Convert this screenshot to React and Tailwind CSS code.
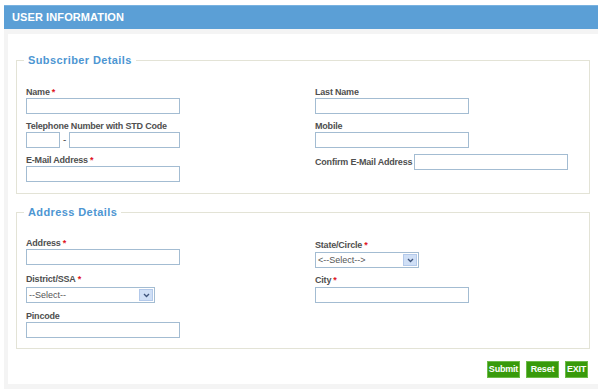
import React from 'react';

const font = { fontFamily: '"Liberation Sans", Arial, sans-serif' };

const Label = ({ children, required, className = '' }) => (
  <div className={`h-[12px] leading-[12px] text-[9px] font-bold tracking-[-0.2px] text-[#4f4f4f] whitespace-nowrap ${className}`}>
    {children}
    {required && <span className="text-[#e0141e] ml-[2px]">*</span>}
  </div>
);

const Input = ({ w = 'w-[154px]', className = '' }) => (
  <input
    type="text"
    className={`${w} h-[16px] border border-[#a3bcd2] bg-white outline-none ${className}`}
  />
);

const Select = ({ w, text, className = '' }) => (
  <div className={`${w} h-[16px] border border-[#a3bcd2] bg-white flex items-center justify-between ${className}`}>
    <span className="pl-[2px] text-[9px] leading-[12px] text-[#555]">{text}</span>
    <span className="w-[14px] h-[12px] mr-[1px] bg-[#cfdff6] border border-[#b3c9ea] grid place-items-center">
      <svg viewBox="0 0 8 6" className="w-[7px] h-[5px]">
        <path d="M1 1.2 L4 4.2 L7 1.2" fill="none" stroke="#3f557c" strokeWidth="1.6" />
      </svg>
    </span>
  </div>
);

const Fieldset = ({ title, children, className = '' }) => (
  <fieldset className={`border border-[#e3e3d6] px-[9px] ${className}`}>
    <legend className="ml-[-2px] px-[4px] text-[11px] leading-[14px] font-bold tracking-[0.4px] text-[#4d96d2]">
      {title}
    </legend>
    {children}
  </fieldset>
);

const Button = ({ children, w }) => (
  <button className={`${w} h-[17px] bg-[#389a0b] border border-[#6dbb48] text-white text-[9px] font-bold tracking-[-0.2px] leading-[15px] text-center`}>
    {children}
  </button>
);

export default function App() {
  return (
    <div className="w-[598px] h-[389px] overflow-hidden bg-white pt-[5px] pl-[4px]" style={font}>
      <div className="h-[24px] bg-[#5b9fd6] border-t border-[#79b2e0] flex items-center pl-[8px]">
        <span className="text-white text-[11px] font-bold tracking-[0.1px]">USER INFORMATION</span>
      </div>

      <div className="bg-[#f4f4f4] pt-[5px] pl-[4px] pb-[5px]">
        <div className="bg-white pt-[19px] px-[8px] pb-[6px]">
          <Fieldset title="Subscriber Details" className="pt-[19px] pb-[11px]">
            <div className="flex">
              <div className="w-[289px] flex flex-col">
                <Label required>Name</Label>
                <Input className="mb-[6px]" />
                <Label>Telephone Number with STD Code</Label>
                <div className="flex items-center gap-[3px] mb-[6px]">
                  <Input w="w-[34px]" />
                  <span className="text-[10px] text-[#555] leading-[10px]">-</span>
                  <Input w="w-[111px]" />
                </div>
                <Label required>E-Mail Address</Label>
                <Input />
              </div>
              <div className="flex flex-col">
                <Label>Last Name</Label>
                <Input className="mb-[6px]" />
                <Label>Mobile</Label>
                <Input className="mb-[6px]" />
                <div className="flex items-center">
                  <Label className="mr-[2px]">Confirm E-Mail Address</Label>
                  <Input />
                </div>
              </div>
            </div>
          </Fieldset>

          <Fieldset title="Address Details" className="mt-[11px] pt-[18px] pb-[10px]">
            <div className="flex">
              <div className="w-[289px] flex flex-col">
                <Label required>Address</Label>
                <Input className="mb-[8px]" />
                <Label required>District/SSA</Label>
                <Select w="w-[129px]" text="--Select--" className="mt-[2px] mb-[7px] h-[15px]" />
                <Label>Pincode</Label>
                <Input />
              </div>
              <div className="flex flex-col pt-[2px]">
                <Label required>State/Circle</Label>
                <Select w="w-[104px]" text="<--Select-->" className="mt-[1px] mb-[6px]" />
                <Label required>City</Label>
                <Input className="mt-[1px]" />
              </div>
            </div>
          </Fieldset>

          <div className="mt-[12px] flex justify-end gap-[6px] pr-[2px]">
            <Button w="w-[33px]">Submit</Button>
            <Button w="w-[33px]">Reset</Button>
            <Button w="w-[23px]">EXIT</Button>
          </div>
        </div>
      </div>
    </div>
  );
}
